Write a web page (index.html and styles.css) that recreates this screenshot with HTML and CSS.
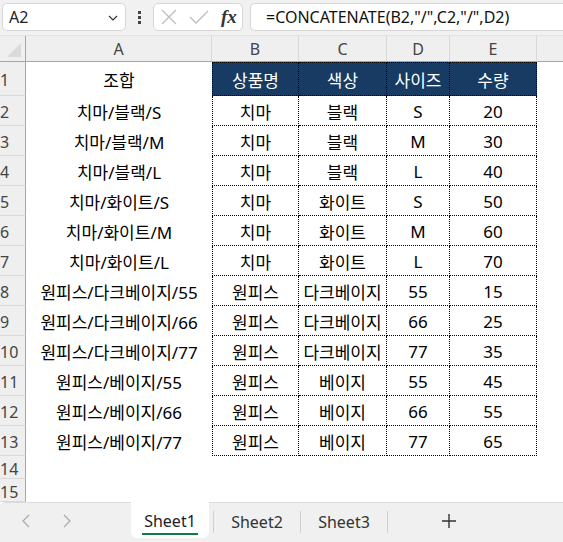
FILE: index.html
```html
<!DOCTYPE html>
<html lang="ko">
<head>
<meta charset="utf-8">
<title>Sheet</title>
<link rel="stylesheet" href="styles.css">
</head>
<body>
<div class="app">
  <div class="fbar">
    <div class="namebox">
      <span class="nb-text">A2</span>
      <svg class="chev" width="10" height="6" viewBox="0 0 10 6"><path d="M1 1 L5 5 L9 1" fill="none" stroke="#333" stroke-width="1.2"/></svg>
    </div>
    <div class="dots"><i></i><i></i><i></i></div>
    <div class="fxbox">
      <svg width="16" height="16" viewBox="0 0 16 16"><path d="M1 1 L15 15 M15 1 L1 15" stroke="#bdbdbd" stroke-width="1.3" fill="none"/></svg>
      <svg width="20" height="16" viewBox="0 0 20 16"><path d="M1 8 L7 14 L19 2" stroke="#bdbdbd" stroke-width="1.3" fill="none"/></svg>
      <span class="fx">fx</span>
    </div>
    <div class="formula">=CONCATENATE(B2,"/",C2,"/",D2)</div>
  </div>

  <div class="sheet">
    <div class="corner"><svg width="14" height="14" viewBox="0 0 14 14"><polygon points="14,0 14,14 0,14" fill="#dadada"/></svg></div>
    <div class="ch">A</div><div class="ch">B</div><div class="ch">C</div><div class="ch">D</div><div class="ch">E</div><div class="ch last"></div>

    <div class="rh">1</div><div class="c">조합</div><div class="t h bl">상품명</div><div class="t h">색상</div><div class="t h">사이즈</div><div class="t h">수량</div><div class="c"></div>
    <div class="rh">2</div><div class="c">치마/블랙/S</div><div class="t bl">치마</div><div class="t">블랙</div><div class="t">S</div><div class="t">20</div><div class="c"></div>
    <div class="rh">3</div><div class="c">치마/블랙/M</div><div class="t bl">치마</div><div class="t">블랙</div><div class="t">M</div><div class="t">30</div><div class="c"></div>
    <div class="rh">4</div><div class="c">치마/블랙/L</div><div class="t bl">치마</div><div class="t">블랙</div><div class="t">L</div><div class="t">40</div><div class="c"></div>
    <div class="rh">5</div><div class="c">치마/화이트/S</div><div class="t bl">치마</div><div class="t">화이트</div><div class="t">S</div><div class="t">50</div><div class="c"></div>
    <div class="rh">6</div><div class="c">치마/화이트/M</div><div class="t bl">치마</div><div class="t">화이트</div><div class="t">M</div><div class="t">60</div><div class="c"></div>
    <div class="rh">7</div><div class="c">치마/화이트/L</div><div class="t bl">치마</div><div class="t">화이트</div><div class="t">L</div><div class="t">70</div><div class="c"></div>
    <div class="rh">8</div><div class="c">원피스/다크베이지/55</div><div class="t bl">원피스</div><div class="t">다크베이지</div><div class="t">55</div><div class="t">15</div><div class="c"></div>
    <div class="rh">9</div><div class="c">원피스/다크베이지/66</div><div class="t bl">원피스</div><div class="t">다크베이지</div><div class="t">66</div><div class="t">25</div><div class="c"></div>
    <div class="rh">10</div><div class="c">원피스/다크베이지/77</div><div class="t bl">원피스</div><div class="t">다크베이지</div><div class="t">77</div><div class="t">35</div><div class="c"></div>
    <div class="rh">11</div><div class="c">원피스/베이지/55</div><div class="t bl">원피스</div><div class="t">베이지</div><div class="t">55</div><div class="t">45</div><div class="c"></div>
    <div class="rh">12</div><div class="c">원피스/베이지/66</div><div class="t bl">원피스</div><div class="t">베이지</div><div class="t">66</div><div class="t">55</div><div class="c"></div>
    <div class="rh">13</div><div class="c">원피스/베이지/77</div><div class="t bl">원피스</div><div class="t">베이지</div><div class="t">77</div><div class="t">65</div><div class="c"></div>
    <div class="rh">14</div><div class="c span"></div>
    <div class="rh">15</div><div class="c span"></div>
  </div>

  <div class="tabs">
    <div class="nav">
      <svg width="8" height="14" viewBox="0 0 8 14"><path d="M7 1 L1 7 L7 13" fill="none" stroke="#a8a8a8" stroke-width="1.2"/></svg>
      <svg width="8" height="14" viewBox="0 0 8 14"><path d="M1 1 L7 7 L1 13" fill="none" stroke="#a8a8a8" stroke-width="1.2"/></svg>
    </div>
    <div class="tab active"><span>Sheet1</span></div>
    <div class="sep"></div>
    <div class="tab"><span>Sheet2</span></div>
    <div class="sep"></div>
    <div class="tab"><span>Sheet3</span></div>
    <div class="sep"></div>
    <div class="add">
      <svg width="16" height="16" viewBox="0 0 16 16"><path d="M8 1 V15 M1 8 H15" stroke="#333" stroke-width="1.4" fill="none"/></svg>
    </div>
  </div>
</div>
</body>
</html>
```

FILE: styles.css
```css
html, body {
  margin: 0;
  padding: 0;
  background: #ffffff;
}
.app {
  width: 563px;
  height: 542px;
  overflow: hidden;
  display: flex;
  flex-direction: column;
  font-family: "Noto Sans", "Noto Sans CJK KR", sans-serif;
}

/* formula bar */
.fbar {
  height: 36px;
  box-sizing: border-box;
  background: #f1f1f1;
  display: flex;
  align-items: flex-start;
  padding: 3px 0 0 2px;
  border-bottom: 1px solid #e2e2e2;
}
.namebox {
  width: 124px;
  height: 28px;
  box-sizing: border-box;
  background: #fff;
  border: 1px solid #d6d6d6;
  border-radius: 5px;
  display: flex;
  align-items: center;
  justify-content: space-between;
  padding: 0 7px 0 6px;
}
.nb-text {
  font-size: 16px;
  color: #222;
}
.chev { margin-top: 2px; }
.dots {
  width: 27px;
  height: 28px;
  display: flex;
  flex-direction: column;
  align-items: center;
  justify-content: center;
  gap: 2px;
}
.dots i {
  width: 3px;
  height: 3px;
  background: #444;
  display: block;
}
.fxbox {
  width: 90px;
  height: 28px;
  box-sizing: border-box;
  background: #fff;
  border: 1px solid #d6d6d6;
  border-radius: 5px;
  display: flex;
  align-items: center;
  padding: 0 0 0 7px;
  gap: 12px;
}
.fx {
  font-family: "Liberation Serif", serif;
  font-style: italic;
  font-weight: bold;
  font-size: 19px;
  color: #333;
}
.formula {
  flex: 1;
  margin-left: 7px;
  height: 28px;
  box-sizing: border-box;
  background: #fff;
  border: 1px solid #d6d6d6;
  border-right: none;
  border-radius: 5px 0 0 5px;
  padding-left: 15px;
  font-size: 16px;
  line-height: 26px;
  color: #111;
  white-space: nowrap;
}

/* sheet grid */
.sheet {
  display: grid;
  grid-template-columns: 26px 186px 87px 88px 63px 87px 1fr;
  grid-template-rows: 26px 34px repeat(12, 30px) 23px 23px;
  font-family: "Noto Sans", "Noto Sans CJK KR", sans-serif;
  font-size: 17px;
  color: #000;
}
.corner {
  background: #efefef;
  border-right: 1px solid #a6a6a6;
  border-bottom: 1px solid #a6a6a6;
  box-sizing: border-box;
  display: flex;
  align-items: flex-end;
  justify-content: flex-end;
  padding: 0 4px 4px 0;
}
.ch {
  background: #efefef;
  box-sizing: border-box;
  border-right: 1px solid #d9d9d9;
  border-bottom: 1px solid #a6a6a6;
  font-family: "Noto Sans", sans-serif;
  font-size: 16px;
  color: #444;
  display: flex;
  align-items: center;
  justify-content: center;
}
.ch.last { border-right: none; }
.rh {
  background: #efefef;
  box-sizing: border-box;
  border-right: 1px solid #a6a6a6;
  border-bottom: 1px solid #d9d9d9;
  font-family: "Noto Sans", sans-serif;
  font-size: 16px;
  color: #444;
  display: flex;
  align-items: center;
  padding-left: 0;
  padding-top: 3px;
}
.c, .t {
  display: flex;
  align-items: center;
  justify-content: center;
  white-space: nowrap;
  box-sizing: border-box;
  padding-top: 1px;
}
.c.span { grid-column: span 6; }
.t {
  border-right: 1px dotted #000;
  border-bottom: 1px dotted #000;
}
.t.bl { border-left: 1px dotted #000; }
.t.h {
  background: #173b62;
  color: #ffffff;
  border-top: 1px dotted #000;
}

/* sheet tabs */
.tabs {
  height: 40px;
  box-sizing: border-box;
  background: #f0f0f0;
  border-top: 1px solid #dcdcdc;
  border-radius: 6px 0 0 0;
  display: flex;
  align-items: flex-start;
  font-family: "Noto Sans", sans-serif;
  font-size: 16px;
  color: #333;
}
.nav {
  width: 131px;
  height: 36px;
  display: flex;
  align-items: center;
  padding-left: 22px;
  gap: 33px;
  box-sizing: border-box;
}
.tab {
  width: 86px;
  height: 35px;
  display: flex;
  align-items: center;
  justify-content: center;
  box-sizing: border-box;
  padding-top: 2px;
}
.tab.active {
  width: 78px;
  background: #ffffff;
  border-radius: 0 0 6px 6px;
  margin-top: -1px;
  height: 36px;
  margin-right: 4px;
  color: #222;
}
.tab.active span {
  border-bottom: 2px solid #107c41;
  padding: 0 2px 1px;
  margin-top: 3px;
}
.sep {
  width: 1px;
  height: 22px;
  background: #cfcfcf;
  margin-top: 8px;
}
.add {
  width: 120px;
  height: 35px;
  display: flex;
  align-items: center;
  padding-left: 53px;
  box-sizing: border-box;
}
```
